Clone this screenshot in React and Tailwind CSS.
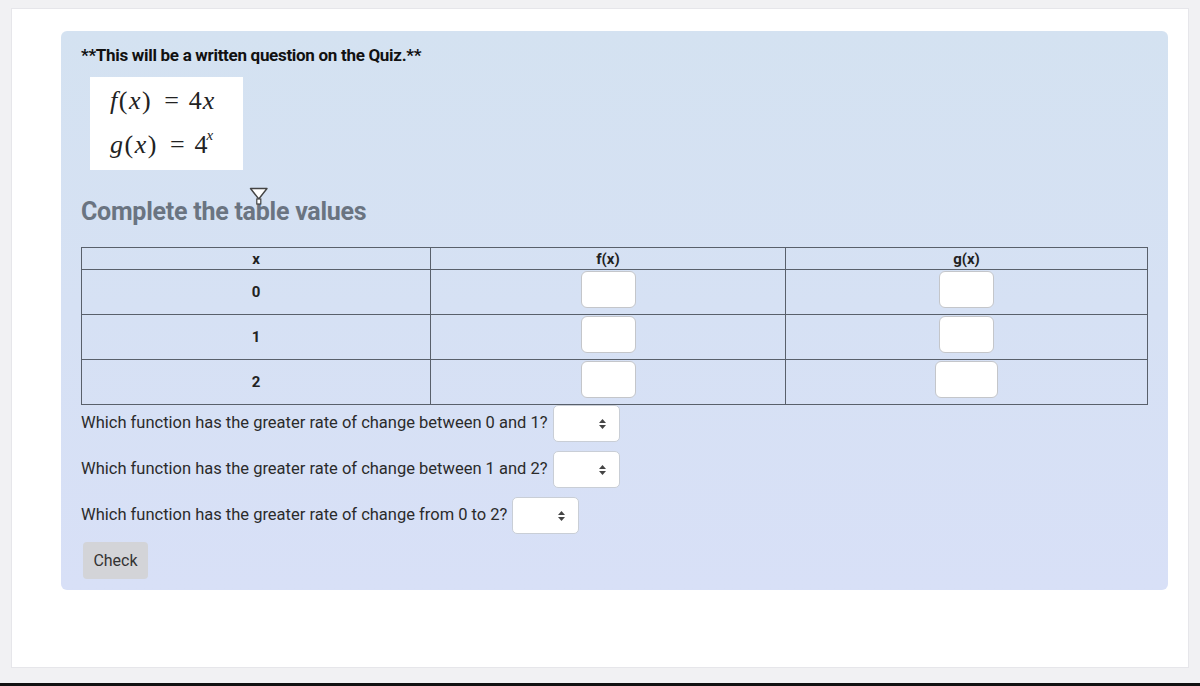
import React from 'react';

const font = { fontFamily: 'Roboto, "Liberation Sans", sans-serif' };

const SelectArrows = () => (
  <svg width="7" height="10" viewBox="0 0 7 10" className="absolute right-[13px] top-1/2 -translate-y-1/2">
    <path d="M3.5 0 L7 4 L0 4 Z" fill="#444" />
    <path d="M3.5 10 L7 6 L0 6 Z" fill="#444" />
  </svg>
);

const Dropdown = ({ w }) => (
  <div className={`relative h-[37px] ${w} rounded-[5px] border border-[#c9ced6] bg-white`}>
    <SelectArrows />
  </div>
);

const Cell = ({ wide }) => (
  <input
    type="text"
    className={`h-[37px] ${wide ? 'w-[63px]' : 'w-[55px]'} rounded-[6px] border border-[#c4c6ca] bg-white outline-none`}
  />
);

const rows = ['0', '1', '2'];

export default function App() {
  return (
    <div className="relative h-[686px] w-[1200px] overflow-hidden bg-[#f1f1f3] pl-[11px] pt-[8px]" style={font}>
      <div className="h-[660px] w-[1178px] border border-[#e6e6ea] bg-white pl-[49px] pt-[22px]">
        <div className="h-[559px] w-[1107px] rounded-[6px] bg-gradient-to-b from-[#d4e2f1] to-[#d8e0f7] pl-[20px] pt-[14px]">
          <p className="text-[17px] font-bold leading-[20px] tracking-[-0.3px] text-[#111]">**This will be a written question on the Quiz.**</p>

          <div
            className="ml-[9px] mt-[12px] h-[93px] w-[153px] bg-white pl-[20px] pt-[2px] text-[26px] leading-[44px] text-[#222]"
            style={{ fontFamily: '"Liberation Serif", "DejaVu Serif", serif' }}
          >
            <div className="flex items-baseline">
              <span className="tracking-[1.5px]"><i>f</i>(<i>x</i>)</span>
              <span className="ml-[12px] mr-[10px]">=</span>
              <span className="tracking-[1px]">4<i>x</i></span>
            </div>
            <div className="flex items-baseline">
              <span className="tracking-[1.5px]"><i>g</i>(<i>x</i>)</span>
              <span className="ml-[12px] mr-[10px]">=</span>
              <span>4</span>
              <i className="relative -top-[13px] -ml-[1px] text-[15px] leading-none">x</i>
            </div>
          </div>

          <div className="relative mt-[27px]">
            <h2 className="text-[25px] font-bold leading-[30px] tracking-[-0.25px] text-[#6a7481]">Complete the table values</h2>
            <svg width="20" height="20" viewBox="0 0 20 20" className="absolute left-[168px] -top-[10px]">
              <path d="M1.5 1.5 L18 1.5 L9.75 12 Z" fill="#fff" stroke="#444" strokeWidth="1.4" strokeLinejoin="round" />
              <rect x="7.8" y="12" width="4" height="5" fill="#fff" stroke="#444" strokeWidth="1.2" />
            </svg>
          </div>

          <table className="mt-[20px] w-[1067px] border-collapse text-[15px] font-bold text-[#222]">
            <thead>
              <tr className="h-[22px]">
                <th className="w-[349px] border border-[#59606b] p-0 leading-[20px]">x</th>
                <th className="w-[355px] border border-[#59606b] p-0 leading-[20px]">f(x)</th>
                <th className="border border-[#59606b] p-0 leading-[20px]">g(x)</th>
              </tr>
            </thead>
            <tbody>
              {rows.map((r, i) => (
                <tr key={r} className="h-[45px]">
                  <td className="border border-[#59606b] p-0 text-center align-middle">{r}</td>
                  <td className="border border-[#59606b] p-0 pt-[1px] pb-[5px] text-center align-top">
                    <Cell />
                  </td>
                  <td className="border border-[#59606b] p-0 pt-[1px] pb-[5px] text-center align-top">
                    <Cell wide={i === 2} />
                  </td>
                </tr>
              ))}
            </tbody>
          </table>

          <div className="text-[16.5px] text-[#2b2b2b]">
            <div className="flex h-[37px] items-center gap-[5px]">
              <span>Which function has the greater rate of change between 0 and 1?</span>
              <Dropdown w="w-[67px]" />
            </div>
            <div className="mt-[9px] flex h-[37px] items-center gap-[5px]">
              <span>Which function has the greater rate of change between 1 and 2?</span>
              <Dropdown w="w-[67px]" />
            </div>
            <div className="mt-[9px] flex h-[37px] items-center gap-[5px]">
              <span>Which function has the greater rate of change from 0 to 2?</span>
              <Dropdown w="w-[67px]" />
            </div>
          </div>

          <button className="ml-[2px] mt-[8px] h-[37px] w-[65px] rounded-[4px] bg-[#d3d4d8] text-[16px] text-[#333]">
            Check
          </button>
        </div>
      </div>
      <div className="absolute bottom-0 left-0 h-[3px] w-full bg-[#111]" />
    </div>
  );
}
